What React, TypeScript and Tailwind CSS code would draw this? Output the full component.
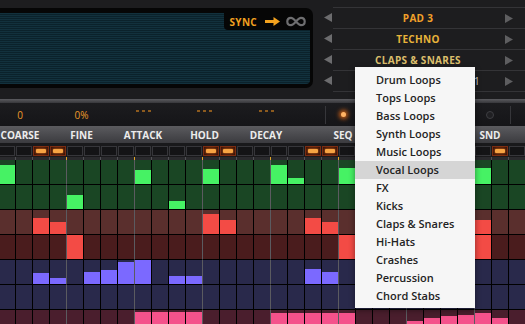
import React from "react";

const MENU_ITEMS = [
  "Drum Loops",
  "Tops Loops",
  "Bass Loops",
  "Synth Loops",
  "Music Loops",
  "Vocal Loops",
  "FX",
  "Kicks",
  "Claps & Snares",
  "Hi-Hats",
  "Crashes",
  "Percussion",
  "Chord Stabs",
];

// last slot shows only its index, the rest is under the dropdown
const PRESETS = [
  { text: "PAD 3", color: "text-[#f2a12a]", align: "text-center" },
  { text: "TECHNO", color: "text-[#e8b43a]", align: "text-center" },
  { text: "CLAPS & SNARES", color: "text-[#dcbf6c]", align: "text-center" },
  { text: "1", color: "text-[#d6d6d6] font-normal", align: "text-right pr-[23px]" },
];

const VALUES = ["0", "0%", "", "", ""];
const LABELS = ["COARSE", "FINE", "ATTACK", "HOLD", "DECAY"];

const COLS = 31;
const LEDS = [2, 3, 12, 13, 18, 19, 22, 23, 29];

type Row = { bg: string; fill: string; steps: Record<number, number> };

// velocity per step (0..1), sparse
const ROWS: Row[] = [
  { bg: "bg-[#1a4624]", fill: "bg-[#46f264]", steps: { 0: 0.79, 8: 0.6, 12: 0.62, 16: 0.79, 17: 0.25, 20: 0.67, 24: 0.6, 28: 0.67 } },
  { bg: "bg-[#1a4624]", fill: "bg-[#46f264]", steps: { 4: 0.6, 10: 0.33, 22: 0.4 } },
  { bg: "bg-[#5a2f2d]", fill: "bg-[#f34b45]", steps: { 2: 0.67, 3: 0.5, 12: 0.83, 13: 0.58, 18: 0.67, 19: 0.5, 22: 0.7, 23: 0.5, 28: 0.58 } },
  { bg: "bg-[#4a1c1d]", fill: "bg-[#f34b45]", steps: { 4: 1, 20: 1, 28: 1 } },
  { bg: "bg-[#29294b]", fill: "bg-[#7b69ff]", steps: { 2: 0.46, 3: 0.25, 5: 0.5, 6: 0.58, 7: 0.92, 8: 1, 10: 0.33, 11: 0.33, 18: 0.62, 19: 0.5 } },
  { bg: "bg-[#29294b]", fill: "bg-[#7b69ff]", steps: {} },
  { bg: "bg-[#4a1e2d]", fill: "bg-[#f4528b]", steps: { 8: 0.92, 9: 0.92, 10: 0.92, 11: 0.92, 16: 0.88, 17: 0.88, 18: 0.88, 19: 0.88, 20: 0.88, 24: 0.54, 25: 0.67, 26: 0.75, 27: 0.79, 28: 0.88, 29: 0.67 } },
];

const isBeat = (k: number) => (k + 1) % 4 === 0;

function LeftTri() {
  return (
    <svg width="8" height="9" viewBox="0 0 8 9">
      <path d="M8 0v9L0 4.5z" fill="#6c6c6e" />
    </svg>
  );
}

function RightTri() {
  return (
    <svg width="8" height="9" viewBox="0 0 8 9">
      <path d="M0 0v9l8-4.5z" fill="#5e5e60" />
    </svg>
  );
}

function Dots() {
  return (
    <div className="mb-[5px] flex gap-[3px]">
      <span className="h-[2px] w-[3px] bg-[#8c5a1e]" />
      <span className="h-[2px] w-[3px] bg-[#8c5a1e]" />
      <span className="h-[2px] w-[3px] bg-[#8c5a1e]" />
    </div>
  );
}

export default function App() {
  return (
    <div className="relative h-[324px] w-[525px] select-none overflow-hidden bg-[#1d1d1f] font-['Open_Sans',sans-serif]">
      {/* --- header: display + preset browser --- */}
      <div className="flex h-[99px]">
        <div className="w-[313px] pt-[8px]">
          <div className="h-[80px] rounded-r-[7px] bg-[#060606] pb-[4px] pr-[3px] pt-[5px]">
            <div className="flex h-full justify-end rounded-r-[4px] bg-[image:repeating-linear-gradient(180deg,#12313d_0px,#12313d_1px,#0b222b_1px,#0b222b_2px)]">
              <div className="flex h-[17px] items-center rounded-bl-[4px] bg-[#060606] pl-[6px] pr-[4px]">
                <span className="text-[10px] font-bold leading-none tracking-[0.3px] text-[#f0a020]">SYNC</span>
                <svg className="ml-[8px]" width="15" height="9" viewBox="0 0 15 9">
                  <path d="M0 3h8.5V0L15 4.5 8.5 9V6H0z" fill="#f3a21e" />
                </svg>
                <svg className="ml-[6px]" width="20" height="11" viewBox="0 0 20 11">
                  <path
                    d="M5 1.8C2.7 1.8 1.3 3.4 1.3 5.5S2.7 9.2 5 9.2C8.6 9.2 11.4 1.8 15 1.8c2.3 0 3.7 1.6 3.7 3.7S17.3 9.2 15 9.2C11.4 9.2 8.6 1.8 5 1.8z"
                    fill="none"
                    stroke="#6e6e70"
                    strokeWidth="2.2"
                  />
                </svg>
              </div>
            </div>
          </div>
        </div>

        <div className="flex w-[20px] flex-col pt-[7px]">
          {PRESETS.map((p) => (
            <div key={p.text} className="flex h-[21px] items-center justify-end pr-[1px]">
              <LeftTri />
            </div>
          ))}
        </div>

        <div className="flex-1 pt-[7px]">
          <div className="border-b border-[#343437]">
            {PRESETS.map((p) => (
              <div key={p.text} className="flex h-[21px] items-center border-t border-[#343437]">
                <span className={`w-[170px] text-[10px] font-bold leading-none tracking-[0.3px] ${p.align} ${p.color}`}>
                  {p.text}
                </span>
                <span className="ml-[2px] flex">
                  <RightTri />
                </span>
              </div>
            ))}
          </div>
        </div>
      </div>

      <div className="h-[4px] bg-gradient-to-b from-[#5c5c60] to-[#37373b]" />

      {/* --- value readouts --- */}
      <div className="flex h-[23px] items-center bg-gradient-to-b from-[#1c1c1f] to-[#151518] text-[10px] text-[#ec9a2a]">
        <div className="ml-[-10.75px] flex">
          {VALUES.map((v, i) => (
            <div key={i} className="flex w-[61.5px] justify-center">
              {v ? <span className="leading-none">{v}</span> : <Dots />}
            </div>
          ))}
        </div>
        <div className="w-[28.25px]" />
        <div className="h-[18px] w-[1px] bg-[#36363a]" />
        <div className="flex w-[34px] justify-center">
          <span className="h-[5px] w-[5px] rounded-full bg-[#ffb466] shadow-[0_0_4px_2px_rgba(240,110,20,0.8)]" />
        </div>
        <div className="w-[113px]" />
        <div className="flex w-[34px] justify-center">
          <span className="h-[8px] w-[8px] rounded-full border border-[#3e3e42] bg-[#202023]" />
        </div>
        <div className="w-[3px]" />
        <div className="h-[18px] w-[1px] bg-[#36363a]" />
      </div>

      {/* --- parameter labels --- */}
      <div className="flex h-[17px] items-center bg-gradient-to-b from-[#5b5b5f] to-[#3b3b3f] text-[10px] font-bold leading-none text-[#ececec]">
        <div className="ml-[-10.75px] flex">
          {LABELS.map((l) => (
            <div key={l} className="flex w-[61.5px] justify-center">
              {l}
            </div>
          ))}
        </div>
        <div className="w-[29.25px]" />
        <div className="flex w-[34px] justify-center">SEQ</div>
        <div className="w-[113px]" />
        <div className="flex w-[34px] justify-center">SND</div>
      </div>

      {/* --- step LEDs --- */}
      <div className="h-[14px] bg-[#19191b] pt-[3px]">
        <div className="ml-[-1px] flex">
          {Array.from({ length: COLS }, (_, k) => (
            <div key={k} className="w-[17px] shrink-0 pr-[1px]">
              {LEDS.includes(k) ? (
                <div className="flex h-[10px] w-[16px] items-center justify-center border border-[#7a2c12] bg-[#3c1409]">
                  <div className="h-[4px] w-[10px] rounded-[1px] bg-[#f7a443] shadow-[0_0_3px_#f07a20]" />
                </div>
              ) : (
                <div className="h-[10px] w-[16px] border border-[#36363a] bg-[#141416]" />
              )}
            </div>
          ))}
        </div>
      </div>

      {/* --- tick strip --- */}
      <div className="ml-[-1px] flex h-[3px] bg-[#2a2a2d]">
        {Array.from({ length: COLS }, (_, k) => (
          <div
            key={k}
            className={`h-[3px] w-[17px] shrink-0 border-r ${isBeat(k) ? "border-r-[#e0a526]" : "border-r-[#505054]"}`}
          />
        ))}
      </div>

      {/* --- step grid --- */}
      <div className="ml-[-1px]">
        {ROWS.map((row, r) => (
          <div key={r} className="flex">
            {Array.from({ length: COLS }, (_, k) => {
              const v = row.steps[k] ?? 0;
              return (
                <div
                  key={k}
                  className={`flex h-[25px] w-[17px] shrink-0 flex-col justify-end border-b border-r border-b-black ${row.bg} ${
                    isBeat(k) ? "border-r-[#5b5b60]" : "border-r-black"
                  }`}
                >
                  {v > 0 && <div className={`w-full ${row.fill}`} style={{ height: `${v * 100}%` }} />}
                </div>
              );
            })}
          </div>
        ))}
      </div>

      {/* --- category dropdown --- */}
      <div className="absolute left-[355px] top-[67px] w-[120px] bg-[#f6f6f6] pb-[3px] pt-[4px] shadow-[0_2px_6px_rgba(0,0,0,0.45)]">
        {MENU_ITEMS.map((item) => (
          <div
            key={item}
            className={`h-[18px] pl-[21px] text-[11px] font-semibold leading-[18px] text-[#232323] ${
              item === "Vocal Loops" ? "bg-[#d5d5d5]" : ""
            }`}
          >
            {item}
          </div>
        ))}
      </div>
    </div>
  );
}
